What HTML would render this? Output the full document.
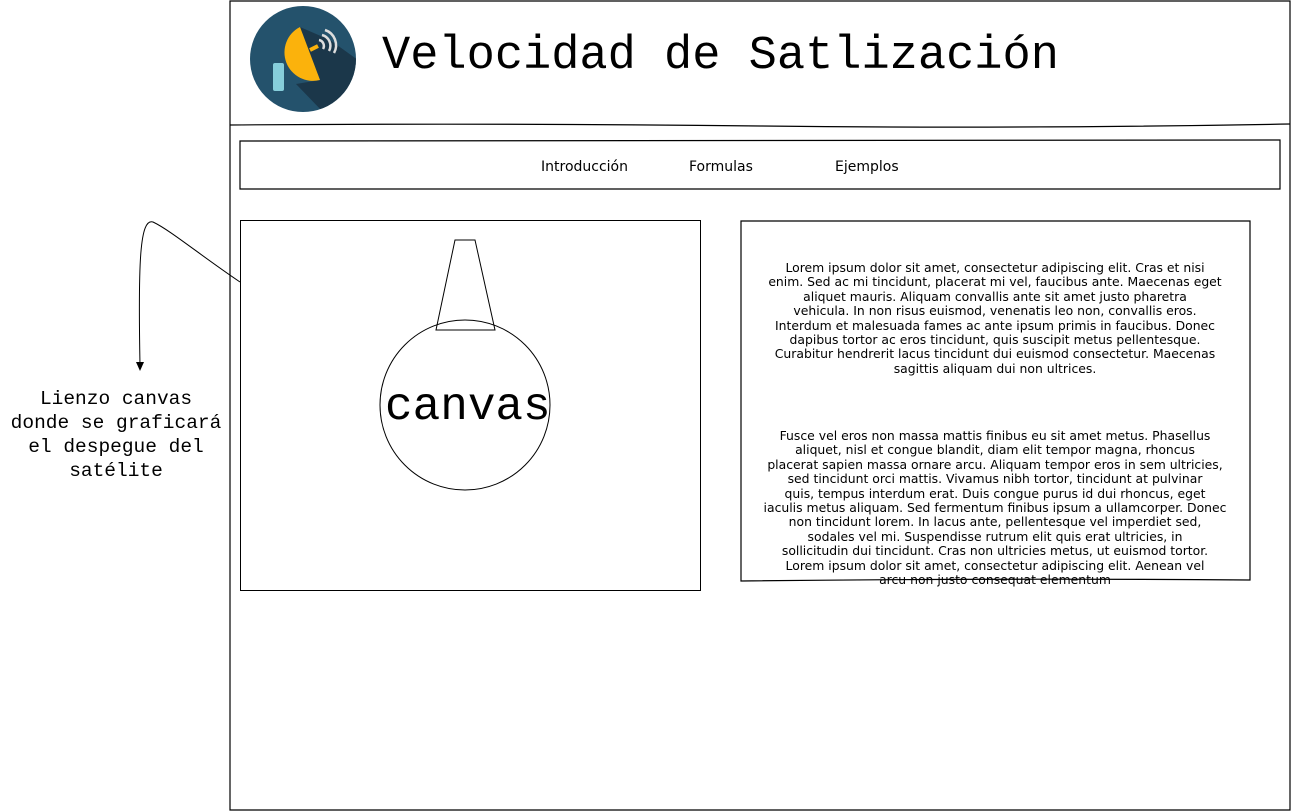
<!DOCTYPE html>
<html><head><meta charset="utf-8"><style>
html,body{margin:0;padding:0;background:#fff;width:1292px;height:812px;overflow:hidden;position:relative}
.abs{position:absolute}
.mono{font-family:"Liberation Mono","DejaVu Sans Mono",monospace;color:#000}
.sans{font-family:"DejaVu Sans","Liberation Sans",sans-serif;color:#000}
.para{font-size:12.4px;line-height:14.4px;text-align:center;white-space:nowrap}
</style></head><body>
<svg class="abs" style="left:0;top:0" width="1292" height="812">
<g fill="none" stroke="#000" stroke-width="1.2">
<path d="M230 1 L1290 1 L1290 810 L230 810 Z"/>
<path d="M230 125 Q500 123 760 126 T1290 124"/>
<path d="M240 141 Q700 139 1280 140 L1280 189 Q700 191 240 189 Z"/>
<path d="M741 221 L1250 221 L1250 580 Q1000 578 741 581 Z"/>
</g>
<rect x="240.5" y="220.5" width="460" height="370" fill="none" stroke="#000"/>
<path d="M455 240 L475 240 L495 330 L436 330 Z" fill="none" stroke="#000"/>
<circle cx="465" cy="405" r="85" fill="none" stroke="#000"/>
<path d="M240 282 C200 255 170 230 153 222 C140 218 138 260 140 365" fill="none" stroke="#000"/>
<path d="M136 362 L140 371 L144 362 Z" fill="#000"/>
<defs><clipPath id="lc"><circle cx="303" cy="59" r="53"/></clipPath></defs>
<circle cx="303" cy="59" r="53" fill="#24526c"/>
<g clip-path="url(#lc)">
<path d="M300 27 L320 80 L296 84 L350 140 L400 140 L400 90 L330 40 Z" fill="#1a3344" opacity="0.85"/>
</g>
<rect x="273" y="63" width="11" height="28" rx="2" fill="#86cedb"/>
<path d="M300 27 A28.5 28.5 0 0 0 320 80 Z" fill="#fbb20c"/>
<path d="M310 50 L318 46" stroke="#fbb20c" stroke-width="4"/>
<path d="M319 40 a6 6 0 0 1 4 9 M322 35 a11 11 0 0 1 7 16 M325 30 a16 16 0 0 1 9 23" fill="none" stroke="#ddd" stroke-width="2.5"/>
</svg>
<div class="abs mono" style="left:382px;top:29px;font-size:47px;line-height:56px;white-space:nowrap">Velocidad de Satlización</div>
<div class="abs mono" style="left:385px;top:380px;font-size:46px;line-height:54px">canvas</div>
<div class="abs mono" style="left:0;top:387px;width:232px;text-align:center;font-size:19.5px;line-height:24px">Lienzo canvas<br>donde se graficará<br>el despegue del<br>satélite</div>
<div class="abs sans" style="left:541px;top:159px;font-size:14px">Introducción</div>
<div class="abs sans" style="left:689px;top:159px;font-size:14px">Formulas</div>
<div class="abs sans" style="left:835px;top:159px;font-size:14px">Ejemplos</div>
<div class="abs sans para" style="left:745px;top:261px;width:500px">Lorem ipsum dolor sit amet, consectetur adipiscing elit. Cras et nisi<br>enim. Sed ac mi tincidunt, placerat mi vel, faucibus ante. Maecenas eget<br>aliquet mauris. Aliquam convallis ante sit amet justo pharetra<br>vehicula. In non risus euismod, venenatis leo non, convallis eros.<br>Interdum et malesuada fames ac ante ipsum primis in faucibus. Donec<br>dapibus tortor ac eros tincidunt, quis suscipit metus pellentesque.<br>Curabitur hendrerit lacus tincidunt dui euismod consectetur. Maecenas<br>sagittis aliquam dui non ultrices.</div>
<div class="abs sans para" style="left:745px;top:429px;width:500px">Fusce vel eros non massa mattis finibus eu sit amet metus. Phasellus<br>aliquet, nisl et congue blandit, diam elit tempor magna, rhoncus<br>placerat sapien massa ornare arcu. Aliquam tempor eros in sem ultricies,<br>sed tincidunt orci mattis. Vivamus nibh tortor, tincidunt at pulvinar<br>quis, tempus interdum erat. Duis congue purus id dui rhoncus, eget<br>iaculis metus aliquam. Sed fermentum finibus ipsum a ullamcorper. Donec<br>non tincidunt lorem. In lacus ante, pellentesque vel imperdiet sed,<br>sodales vel mi. Suspendisse rutrum elit quis erat ultricies, in<br>sollicitudin dui tincidunt. Cras non ultricies metus, ut euismod tortor.<br>Lorem ipsum dolor sit amet, consectetur adipiscing elit. Aenean vel<br>arcu non justo consequat elementum</div>
</body></html>
